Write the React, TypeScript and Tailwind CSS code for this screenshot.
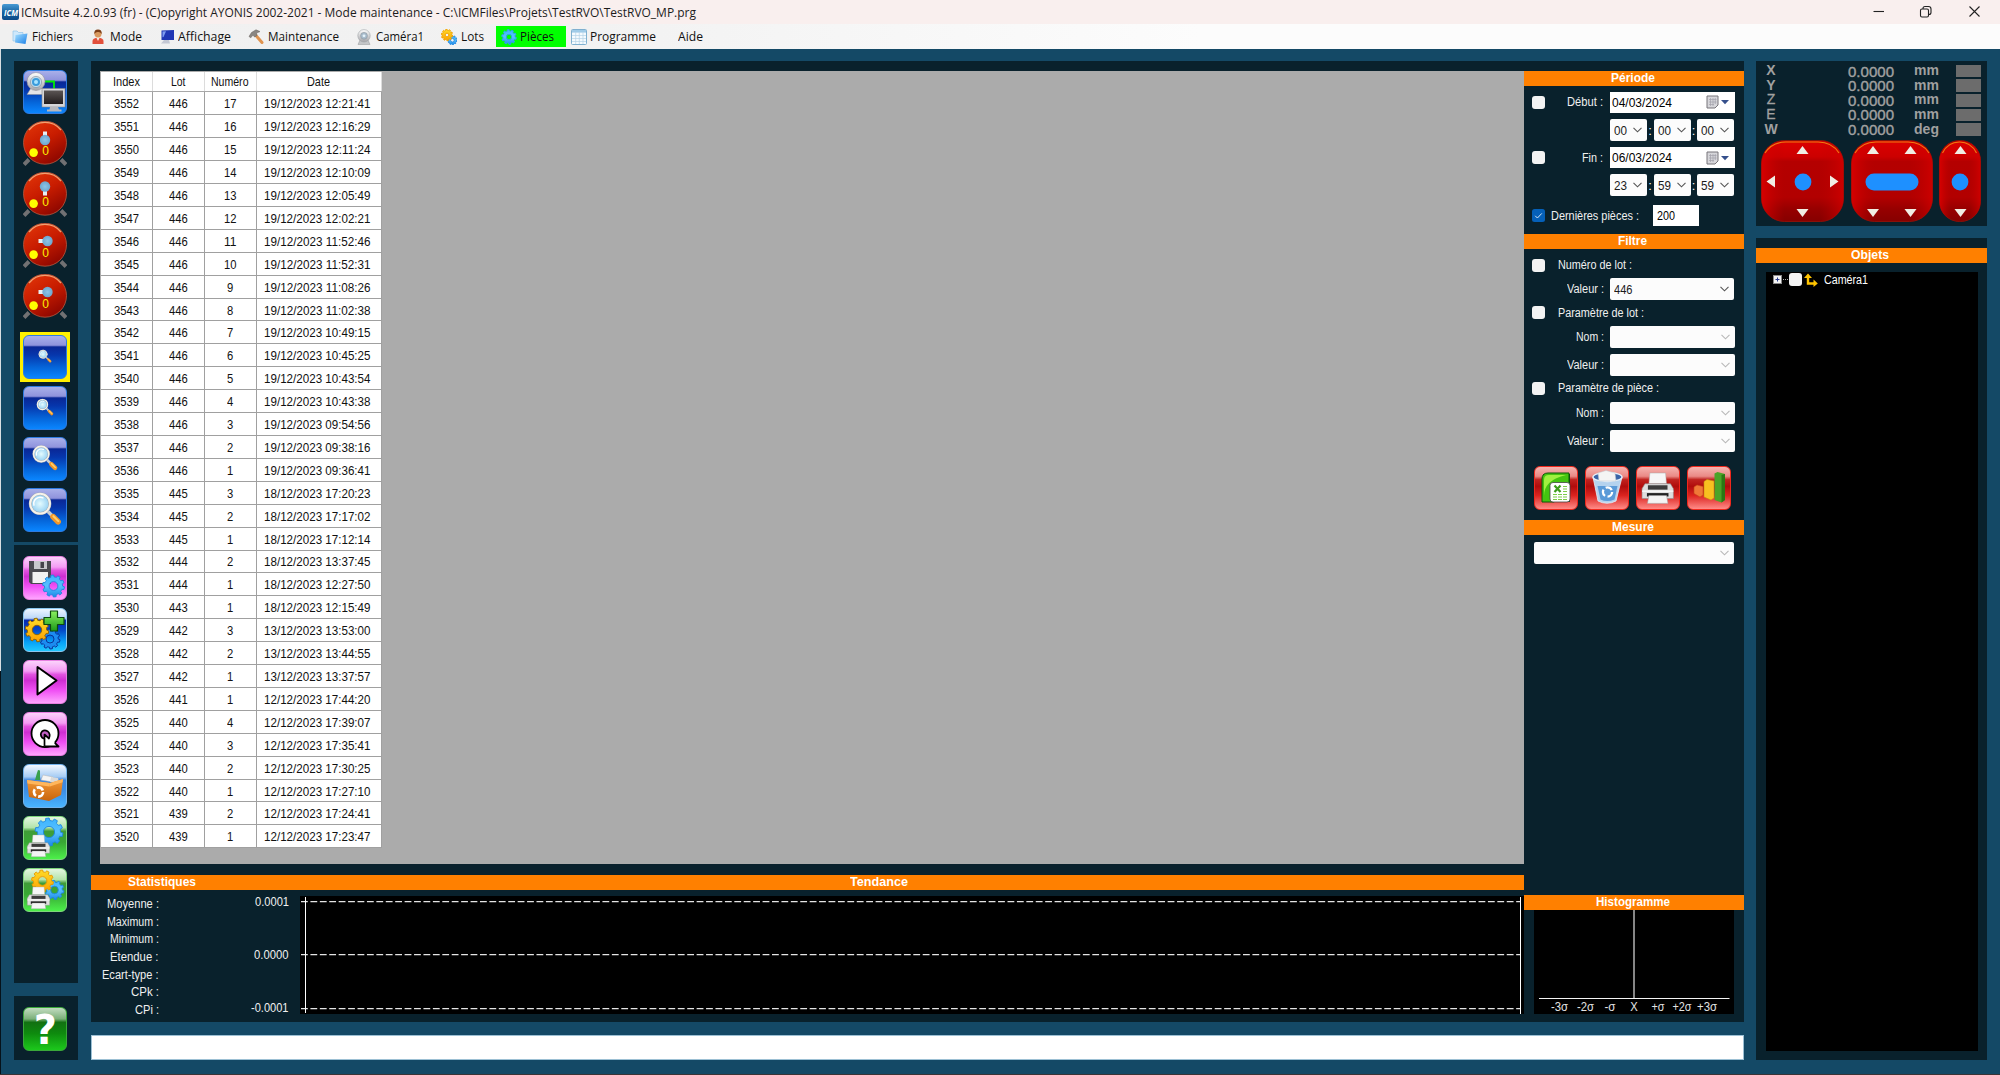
import React, { useLayoutEffect, useRef, useState } from 'react';

/* Single-line text condensed or widened to a given width. */
function T({ children, w, className = '' }: { children: string; w: number; className?: string }) {
  const ref = useRef<HTMLSpanElement>(null);
  const [k, setK] = useState(1);
  useLayoutEffect(() => {
    if (ref.current) setK(w / ref.current.getBoundingClientRect().width);
  }, []);
  return (
    <span className={'inline-block shrink-0 whitespace-nowrap leading-none ' + className} style={{ width: w }}>
      <span ref={ref} className="inline-block origin-left" style={{ transform: `scaleX(${k})` }}>
        {children}
      </span>
    </span>
  );
}

function gearPath(cx: number, cy: number, R: number, r: number, n: number, hole: number) {
  let d = '';
  for (let i = 0; i < n; i++) {
    const s = (Math.PI * 2) / n;
    const pts: [number, number][] = [[r, -0.5], [r, -0.3], [R, -0.2], [R, 0.2], [r, 0.3]];
    pts.forEach(([q, f]) => {
      const a = (i + f) * s + 0.2;
      d += `${d ? 'L' : 'M'}${(cx + q * Math.cos(a)).toFixed(2)} ${(cy + q * Math.sin(a)).toFixed(2)}`;
    });
  }
  d += `Z M${cx + hole} ${cy} a${hole} ${hole} 0 1 0 ${-2 * hole} 0 a${hole} ${hole} 0 1 0 ${2 * hole} 0Z`;
  return d;
}

function Gear({ x, y, r, fill, stroke = '#1e86e0', hole = 0.4 }: { x: number; y: number; r: number; fill: string; stroke?: string; hole?: number }) {
  return <path d={gearPath(x, y, r, r * 0.82, 10, r * hole)} fill={fill} stroke={stroke} strokeWidth=".9" strokeLinejoin="round" fillRule="evenodd" />;
}

function Defs() {
  return (
    <svg className="absolute h-0 w-0">
      <defs>
        <linearGradient id="dial" x1="0.2" y1="0" x2="0.8" y2="1">
          <stop offset="0" stopColor="#e03408" />
          <stop offset=".45" stopColor="#c81c00" />
          <stop offset="1" stopColor="#860400" />
        </linearGradient>
        <radialGradient id="ball">
          <stop offset="0" stopColor="#8cc4e8" />
          <stop offset="1" stopColor="#6fa6cc" />
        </radialGradient>
        <radialGradient id="lens">
          <stop offset="0" stopColor="#e4fbff" />
          <stop offset="1" stopColor="#8fcdf2" />
        </radialGradient>
        <linearGradient id="bluegear" x1="0" y1="0" x2="0" y2="1">
          <stop offset="0" stopColor="#3cb4ff" />
          <stop offset=".5" stopColor="#58c0ff" />
          <stop offset="1" stopColor="#1c8ae8" />
        </linearGradient>
        <linearGradient id="orangegear" x1="0" y1="0" x2="0" y2="1">
          <stop offset="0" stopColor="#ffdc28" />
          <stop offset="1" stopColor="#fba000" />
        </linearGradient>
        <linearGradient id="steel" x1="0" y1="0" x2="0" y2="1">
          <stop offset="0" stopColor="#ffffff" />
          <stop offset="1" stopColor="#a4a4a8" />
        </linearGradient>
        <linearGradient id="screen" x1="0" y1="0" x2="0" y2="1">
          <stop offset="0" stopColor="#5b5554" />
          <stop offset="1" stopColor="#221c1c" />
        </linearGradient>
        <linearGradient id="pad" x1="0" y1="0" x2="0" y2="1">
          <stop offset="0" stopColor="#dc0000" />
          <stop offset=".2" stopColor="#cc0000" />
          <stop offset=".26" stopColor="#b40000" />
          <stop offset=".7" stopColor="#b20000" />
          <stop offset=".85" stopColor="#960000" />
          <stop offset="1" stopColor="#860000" />
        </linearGradient>
        <linearGradient id="padside" x1="0" y1="0" x2="1" y2="0">
          <stop offset="0" stopColor="#e00000" stopOpacity=".8" />
          <stop offset=".28" stopColor="#c00000" stopOpacity="0" />
          <stop offset=".72" stopColor="#c00000" stopOpacity="0" />
          <stop offset="1" stopColor="#d80000" stopOpacity=".7" />
        </linearGradient>
        <linearGradient id="folder" x1="0" y1="0" x2="1" y2="1">
          <stop offset="0" stopColor="#a6e0ff" />
          <stop offset="1" stopColor="#1a7fe6" />
        </linearGradient>
        <linearGradient id="plus" x1="0" y1="0" x2="0" y2="1">
          <stop offset="0" stopColor="#8af060" />
          <stop offset="1" stopColor="#1d9a18" />
        </linearGradient>
        <linearGradient id="crate" x1="0" y1="0" x2="0" y2="1">
          <stop offset="0" stopColor="#f39a38" />
          <stop offset="1" stopColor="#c8640c" />
        </linearGradient>
      </defs>
    </svg>
  );
}

const blueBtn = 'border-[#2f7be0] bg-[linear-gradient(180deg,#a9b0ea_0%,#8f93dc_22%,#0a2796_26%,#0636ac_45%,#0566da_75%,#0a86ff_100%)]';
const pinkBtn = 'border-[#e77fe0] bg-[linear-gradient(180deg,#fbd3fb_0%,#f49cf4_24%,#e254e0_32%,#cf2ed2_46%,#f050f4_70%,#ffa4ff_100%)]';
const cyanBtn = 'border-[#8cc8f0] bg-[linear-gradient(180deg,#eef6ff_0%,#bcd8f8_22%,#0428b0_27%,#0348c8_50%,#06a0f8_78%,#20c8ff_100%)]';
const skyBtn = 'border-[#74b4ee] bg-[linear-gradient(180deg,#f4f9ff_0%,#a6ccf4_28%,#3f86dc_36%,#3c8ce4_60%,#48b4ff_100%)]';
const greenBtn = 'border-[#7ed67c] bg-[linear-gradient(180deg,#e4f6e0_0%,#b4e4ac_25%,#3f9c38_34%,#38a834_60%,#4cf04a_100%)]';
const helpBtn = 'border-[#3aa83a] bg-[linear-gradient(180deg,#c2dcc0_0%,#7cb07a_26%,#127012_34%,#0e8a0e_60%,#1cc81c_100%)]';
const redBtn = 'border-[#f0281c] bg-[linear-gradient(180deg,#f6b4b0_0%,#ea8a86_22%,#c02420_30%,#b00c0c_46%,#dc2420_68%,#ff8c88_100%)]';

function Btn({ tone, children }: { tone: string; children: React.ReactNode }) {
  return (
    <div className={'h-11 w-11 shrink-0 rounded-[6px] border ' + tone}>
      <svg viewBox="1 1 42 42" className="block h-full w-full overflow-visible">{children}</svg>
    </div>
  );
}

function Dial({ head }: { head: 'up' | 'down' | 'left' }) {
  const cx = head === 'left' ? 24.5 : 22;
  return (
    <svg viewBox="0 0 44 46" className="mb-[5px] block h-[46px] w-11 shrink-0">
      <path d="M1 43.5 L6 38.5 M43 43.5 L38 38.5" stroke="#717173" strokeWidth="4" />
      <circle cx="22" cy="21.7" r="21.5" fill="url(#dial)" stroke="#b85a40" strokeWidth=".8" />
      <path d="M6 9 A20.5 20.5 0 0 1 38 9" fill="none" stroke="#f2a070" strokeWidth="1.3" />
      {head === 'up' && <rect x="20" y="10.5" width="4" height="5" fill="#e8eef2" />}
      {head === 'down' && <rect x="20" y="18" width="4" height="5.5" fill="#e8eef2" />}
      {head === 'left' && <rect x="15.5" y="16" width="5" height="4" fill="#e8eef2" />}
      <circle cx={cx} cy={head === 'down' ? 14.5 : head === 'left' ? 18 : 19} r="5.2" fill="url(#ball)" />
      <circle cx="10.6" cy="31.6" r="4.3" fill="#ffff00" />
      <text x="22.6" y="33.7" fontSize="12" textAnchor="middle" fill="#ffee00" fontFamily="Liberation Sans">0</text>
    </svg>
  );
}

function Lens({ k }: { k: number }) {
  const x = 22 - 3.4 * k;
  const y = 21.5 - 4 * k;
  return (
    <g strokeLinecap="round">
      <path d={`M${x + 5.6 * k} ${y + 5.6 * k} L${x + 8 * k} ${y + 8 * k}`} stroke="#c8d0d8" strokeWidth={2.4 * k} />
      <path d={`M${x + 9 * k} ${y + 9 * k} L${x + 12.4 * k} ${y + 12.4 * k}`} stroke="#f0962a" strokeWidth={4 * k} />
      <path d={`M${x + 9.2 * k} ${y + 8.6 * k} L${x + 12.6 * k} ${y + 12 * k}`} stroke="#ffd068" strokeWidth={1.4 * k} />
      <circle cx={x} cy={y} r={6.8 * k} fill="url(#lens)" stroke="#9aa4ac" strokeWidth={2 * k} />
      <circle cx={x} cy={y} r={6.8 * k} fill="none" stroke="#f6f2ea" strokeWidth={1.4 * k} />
      <path d={`M${x - 4.2 * k} ${y + 1 * k} A${4.4 * k} ${4.4 * k} 0 0 1 ${x + 2 * k} ${y - 4 * k}`} fill="none" stroke="#ffffff" strokeWidth={1 * k} />
    </g>
  );
}

function Printer({ x, y, k }: { x: number; y: number; k: number }) {
  return (
    <g transform={`translate(${x} ${y}) scale(${k})`}>
      <path d="M7 0 H23 L24 11 H6 Z" fill="#f6f6f6" stroke="#a8a8a8" strokeWidth=".5" />
      <path d="M2 11 H28 L31 16 V26 H-1 V16 Z" fill="#dedede" stroke="#8e8e8e" strokeWidth=".6" />
      <path d="M5 12.5 H25 V17 H5Z" fill="#3c3c3c" />
      <path d="M-1 18.5 H31" stroke="#ffffff" strokeWidth="1.2" />
      <path d="M4 20.5 H26 V24 H4Z" fill="#222" />
      <path d="M6 23 H24 L25.5 31 H4.5 Z" fill="#f4f4f4" stroke="#9a9a9a" strokeWidth=".5" />
    </g>
  );
}

function Webcam() {
  return (
    <>
      <path d="M22 11.500 H31 V19" fill="none" stroke="#00f000" strokeWidth="1.8" />
      <path d="M8 18 H19 L22 24.500 H4 Z" fill="#e4e4e6" stroke="#8a8a90" strokeWidth=".5" />
      <circle cx="13" cy="11.500" r="9" fill="url(#steel)" stroke="#94949c" strokeWidth=".6" />
      <circle cx="13" cy="12" r="5.600" fill="#c4dcea" stroke="#7c8c9a" strokeWidth=".6" />
      <circle cx="13" cy="12" r="4" fill="#3a9cdc" />
      <circle cx="13" cy="12" r="2" fill="#a8e4ff" />
      <rect x="19" y="18.500" width="23" height="18.500" fill="#d6d6d8" stroke="#88888c" strokeWidth=".6" />
      <rect x="21" y="20.500" width="19" height="13.500" fill="url(#screen)" />
      <path d="M27 37 H35 L36 39.500 H38.500 V41.500 H24 V39.500 H26.500 Z" fill="#b8b8bc" />
    </>
  );
}

function MenuIcon({ name }: { name: string }) {
  return (
    <svg viewBox="0 0 16 16" className="block h-4 w-4 shrink-0">
      {name === 'folder' && (
        <>
          <path d="M1 2 H5 L6.5 3.5 H11 V12 H1Z" fill="#cfe8fb" stroke="#86bfe8" strokeWidth=".6" />
          <path d="M3.5 6 L15.5 4.5 L13.5 15 L3 13.5Z" fill="url(#folder)" />
        </>
      )}
      {name === 'user' && (
        <>
          <path d="M2.500 15 V12 Q2.500 9 8 8.500 Q13.500 9 13.500 12 V15Z" fill="#e2503c" />
          <path d="M6 8 L8 12 L10 8Z" fill="#f6ece0" />
          <circle cx="8" cy="4.8" r="3.6" fill="#d99a60" />
          <path d="M4.3 5 Q4 .6 8 .6 Q12 .6 11.7 5 Q10 2.6 8 3 Q6 2.6 4.3 5Z" fill="#7c3e18" />
        </>
      )}
      {name === 'screen' && (
        <>
          <path d="M2.5 1.5 L15 1 V11 L2.5 11Z" fill="#2036b4" />
          <path d="M3.500 2.500 L7 2.300 L4.500 8 L3.500 8.300Z" fill="#7f9cf0" />
          <path d="M5 11 H10 L11 14.5 H2 Z" fill="#c4c8d4" />
        </>
      )}
      {name === 'hammer' && (
        <>
          <path d="M7.5 6 L14 13.5" stroke="#e09450" strokeWidth="3" strokeLinecap="round" />
          <path d="M1 7.5 L3.5 3.5 L8 .8 L12 2.6 L8.5 4 L9 6.6 L6.5 8 L5 6 L2.8 8.8Z" fill="#8a8682" stroke="#66615c" strokeWidth=".5" />
        </>
      )}
      {name === 'webcam' && (
        <>
          <path d="M4 11 H12 L14 15.500 H2Z" fill="#c4c6c8" stroke="#96989a" strokeWidth=".5" />
          <circle cx="8" cy="6.8" r="6.200" fill="url(#steel)" stroke="#a0a4a8" strokeWidth=".6" />
          <circle cx="8" cy="6.8" r="3.4" fill="#a8bccc" stroke="#8a949c" strokeWidth=".6" />
          <circle cx="8" cy="6.8" r="1.4" fill="#e4f2fa" />
        </>
      )}
      {name === 'lots' && (
        <>
          <Gear x={11.4} y={11.2} r={4.6} fill="url(#bluegear)" />
          <Gear x={6} y={6} r={5.7} fill="url(#orangegear)" stroke="#f0a000" hole={0.32} />
        </>
      )}
      {name === 'piece' && <Gear x={8} y={8} r={7.4} fill="url(#bluegear)" stroke="#2ea0e8" hole={0.36} />}
      {name === 'table' && (
        <>
          <rect x=".5" y=".5" width="15" height="15" rx="1" fill="#f4fafe" stroke="#7fb0d0" />
          <rect x="1" y="1" width="14" height="2.6" fill="#9fcbe8" />
          <path d="M4.7 3 V15 M8.3 3 V15 M12 3 V15 M1 6.5 H15 M1 9.5 H15 M1 12.5 H15" stroke="#b4d2e6" strokeWidth=".7" />
        </>
      )}
    </svg>
  );
}

function Bar({ children, w, className = '' }: { children?: string; w?: number; className?: string }) {
  return (
    <div className={'flex h-[15px] shrink-0 items-center justify-center bg-[#ff8000] pb-[2px] pr-[2px] text-[13px] font-bold text-white ' + className}>
      {children && <T w={w || 40}>{children}</T>}
    </div>
  );
}

function Check({ on }: { on?: boolean }) {
  return on ? (
    <svg viewBox="0 0 13 13" className="h-[13px] w-[13px] shrink-0">
      <rect width="13" height="13" rx="2.5" fill="#0560b8" />
      <path d="M3.2 6.8 L5.4 9 L9.8 4.4" fill="none" stroke="#d4e6f6" strokeWidth="1" />
    </svg>
  ) : (
    <div className="h-[13px] w-[13px] shrink-0 rounded-[3px] bg-[#f3f3f3]" />
  );
}

function Select({ value, vw = 13, dim, className = '' }: { value?: string; vw?: number; dim?: boolean; className?: string }) {
  return (
    <div className={'flex h-[22px] shrink-0 items-center justify-between rounded-[2px] bg-[#fcfcfc] pl-1 pr-[5px] text-[13px] text-[#1a1a1a] ' + className}>
      {value ? <T w={vw}>{value}</T> : <span />}
      <svg viewBox="0 0 9 6" className={'h-1.5 w-[9px] ' + (dim ? 'text-[#b8b8b8]' : 'text-[#555]')}>
        <path d="M.5 .8 L4.5 4.8 L8.5 .8" fill="none" stroke="currentColor" strokeWidth="1.1" />
      </svg>
    </div>
  );
}

function DateField({ value }: { value: string }) {
  return (
    <div className="flex h-[21px] w-[125px] shrink-0 items-center bg-white pl-[2px] text-[13px] text-black">
      <T w={60}>{value}</T>
      <svg viewBox="0 0 24 14" className="ml-auto mr-[5px] h-3.5 w-6">
        <path d="M1 1 H12 V10 L9 13 H1Z" fill="#d6d6da" stroke="#77747a" />
        <path d="M3 4.5 H10.5 M3 7 H10.5 M3 9.5 H8 M4.5 3 V11 M7 3 V11 M9.3 3 V9" stroke="#a2a0aa" strokeWidth=".7" />
        <path d="M15 5 H23 L19 9.2Z" fill="#35508c" />
      </svg>
    </div>
  );
}

function TimeRow({ v }: { v: string[] }) {
  return (
    <div className="flex h-[22px] items-center gap-px pl-[86px] text-[13px] text-white">
      <Select value={v[0]} className="w-[37px]" />
      <span className="w-[5px] text-center leading-none">:</span>
      <Select value={v[1]} className="w-[37px]" />
      <span className="w-[4px] text-center leading-none">:</span>
      <Select value={v[2]} className="w-[37px]" />
    </div>
  );
}

function Labelled({ label, w, children, className = '' }: { label: string; w: number; children: React.ReactNode; className?: string }) {
  return (
    <div className={'flex h-[22px] items-center ' + className}>
      <div className="mr-[6px] flex w-[80px] shrink-0 justify-end"><T w={w}>{label}</T></div>
      {children}
    </div>
  );
}

function CheckLine({ label, w, className }: { label: string; w: number; className: string }) {
  return (
    <div className={'flex h-[14px] items-center pl-2 ' + className}>
      <Check />
      <T w={w} className="ml-[13.5px]">{label}</T>
    </div>
  );
}

const menu: [string, string, number, string][] = [
  ['folder', 'Fichiers', 41, 'ml-[4px]'],
  ['user', 'Mode', 32, 'ml-[4px]'],
  ['screen', 'Affichage', 53, 'ml-[3px]'],
  ['hammer', 'Maintenance', 71, 'ml-[4px]'],
  ['webcam', 'Caméra1', 48, 'ml-[4px]'],
  ['lots', 'Lots', 23, 'ml-[4px]'],
  ['piece', 'Pièces', 34, 'ml-[3px]'],
  ['table', 'Programme', 66, 'ml-[3px]'],
  ['', 'Aide', 25, ''],
];
const menuWidths = ['w-[78px]', 'w-[69px]', 'w-[89px]', 'w-[108px]', 'w-[85px]', 'w-[55px]', 'w-[70px] bg-[#00ff00] pl-[5px]', 'w-[107px] pl-[5px]', 'pl-[5px]'];

const rows = `3552 446 17 19/12/2023 12:21:41
3551 446 16 19/12/2023 12:16:29
3550 446 15 19/12/2023 12:11:24
3549 446 14 19/12/2023 12:10:09
3548 446 13 19/12/2023 12:05:49
3547 446 12 19/12/2023 12:02:21
3546 446 11 19/12/2023 11:52:46
3545 446 10 19/12/2023 11:52:31
3544 446 9 19/12/2023 11:08:26
3543 446 8 19/12/2023 11:02:38
3542 446 7 19/12/2023 10:49:15
3541 446 6 19/12/2023 10:45:25
3540 446 5 19/12/2023 10:43:54
3539 446 4 19/12/2023 10:43:38
3538 446 3 19/12/2023 09:54:56
3537 446 2 19/12/2023 09:38:16
3536 446 1 19/12/2023 09:36:41
3535 445 3 18/12/2023 17:20:23
3534 445 2 18/12/2023 17:17:02
3533 445 1 18/12/2023 17:12:14
3532 444 2 18/12/2023 13:37:45
3531 444 1 18/12/2023 12:27:50
3530 443 1 18/12/2023 12:15:49
3529 442 3 13/12/2023 13:53:00
3528 442 2 13/12/2023 13:44:55
3527 442 1 13/12/2023 13:37:57
3526 441 1 12/12/2023 17:44:20
3525 440 4 12/12/2023 17:39:07
3524 440 3 12/12/2023 17:35:41
3523 440 2 12/12/2023 17:30:25
3522 440 1 12/12/2023 17:27:10
3521 439 2 12/12/2023 17:24:41
3520 439 1 12/12/2023 17:23:47`.split('\n').map((l) => {
  const p = l.split(' ');
  return [p[0], p[1], p[2], p[3] + ' ' + p[4]];
});
const cols = 'grid grid-cols-[52px_52px_52px_125px]';

function Table() {
  return (
    <div className="w-[282px] pl-px pt-px text-[13px] text-[#111]">
      <div className={cols + ' h-5 border-b border-[#a8a8a8] bg-white'}>
        {([['Index', 27], ['Lot', 14.5], ['Numéro', 37.5], ['Date', 23]] as [string, number][]).map(([h, w]) => (
          <div key={h} className="flex items-center justify-center border-r border-[#dcdcdc]"><T w={w}>{h}</T></div>
        ))}
      </div>
      {rows.map((r) => (
        <div key={r[0]} className={cols + ' h-[22.92px] bg-white'}>
          {r.map((c, i) => (
            <div key={i} className={'flex items-center justify-center border-b border-r border-[#a0a0a0] pt-px ' + (i === 3 ? 'pr-[2px]' : '')}>
              <T w={i === 3 ? 106.5 : c.length * 6.25}>{c}</T>
            </div>
          ))}
        </div>
      ))}
    </div>
  );
}

function Sidebar() {
  return (
    <div className="flex w-16 shrink-0 flex-col">
      <div className="flex h-[481px] flex-col items-center bg-[#09212c] pr-px pt-[8.500px]">
        <Btn tone={blueBtn}><Webcam /></Btn>
        <div className="h-[7.500px] shrink-0" />
        <Dial head="up" />
        <Dial head="down" />
        <Dial head="left" />
        <Dial head="left" />
        <div className="mb-1 mt-[7px] flex h-[50px] w-[50px] shrink-0 items-center justify-center bg-[#fff000]">
          <Btn tone={blueBtn}><Lens k={0.58} /></Btn>
        </div>
        <div className="flex flex-col gap-[7px]">
          <Btn tone={blueBtn}><Lens k={0.75} /></Btn>
          <Btn tone={blueBtn}><Lens k={1.12} /></Btn>
          <Btn tone={blueBtn}><Lens k={1.45} /></Btn>
        </div>
      </div>
      <div className="mt-[3px] flex h-[438px] flex-col items-center gap-2 bg-[#09212c] pr-px pt-[10.500px]">
        <Btn tone={pinkBtn}>
          <path d="M6 5 H28 V28 H8 L6 26Z" fill="#4a4a50" />
          <rect x="11" y="5" width="13" height="8" fill="#c8c8cc" /><rect x="17.5" y="6" width="3.5" height="6" fill="#44444a" />
          <rect x="9.5" y="16" width="15.5" height="11" fill="#f2f2f2" />
          <Gear x={30.5} y={30} r={11} fill="url(#bluegear)" />
        </Btn>
        <Btn tone={cyanBtn}>
          <Gear x={27} y={31} r={10} fill="#1c8cf0" stroke="#0a2a90" />
          <Gear x={14} y={22} r={11.8} fill="url(#orangegear)" stroke="#8a5c00" />
          <path d="M27.5 3 H34.5 V9.5 H41 V16.5 H34.5 V23 H27.5 V16.5 H21 V9.5 H27.5Z" fill="url(#plus)" stroke="#0d4a10" strokeWidth="1.2" strokeLinejoin="round" />
        </Btn>
        <Btn tone={pinkBtn}>
          <path d="M14.5 7 V34.5 L33.5 20.5Z" fill="#fff" stroke="#000" strokeWidth="2" strokeLinejoin="round" />
        </Btn>
        <Btn tone={pinkBtn}>
          <circle cx="22" cy="21.500" r="13.500" fill="#fff" stroke="#000" strokeWidth="1.8" />
          <path d="M21.500 34.500 H35.500 L31.500 30.500 L21.500 22Z" fill="#fff" />
          <path d="M21.500 34.500 H35.500 L31.800 30.800" fill="none" stroke="#000" strokeWidth="1.8" strokeLinejoin="round" />
          <path d="M21.500 34.500 V22.500 L26 26.500 Q28 22 24.500 19.200 Q21.500 17.500 19 19.500 Q16.500 22.500 19.200 25.800 L21.500 27" fill="#c060c4" stroke="#000" strokeWidth="1.700" strokeLinejoin="round" />
        </Btn>
        <Btn tone={skyBtn}>
          <path d="M12 16 L14 9 L15 6 L17 6.5 L17 16Z" fill="#38a04c" />
          <path d="M18 16 L20 11 L30 13 L30 18Z" fill="#f4f4f4" stroke="#b4b4b4" strokeWidth=".5" />
          <path d="M28 13 L35 14 L36 18 H27Z" fill="#dadada" />
          <path d="M4 16 L27 19 L40 15 L38 31 L26 37 L6 33Z" fill="url(#crate)" />
          <path d="M4 16 L27 19 L26.5 22.5 L4.5 19.5Z M27 19 L40 15 L39.6 18.2 L26.8 22.5Z" fill="#ffb65c" />
          <circle cx="15.5" cy="28" r="4.6" fill="none" stroke="#fff" strokeWidth="2.6" strokeDasharray="7.4 2.2" />
        </Btn>
        <Btn tone={greenBtn}>
          <Gear x={26} y={16} r={14} fill="url(#bluegear)" />
          <Printer x={5} y={19} k={0.7} />
        </Btn>
        <Btn tone={greenBtn}>
          <Gear x={31.5} y={22} r={9.5} fill="url(#bluegear)" />
          <Gear x={19.5} y={13} r={11} fill="url(#orangegear)" stroke="#e89800" />
          <Printer x={5} y={19} k={0.7} />
        </Btn>
      </div>
      <div className="mt-[13px] flex h-16 flex-col items-center bg-[#09212c] pr-px pt-[10.500px]">
        <Btn tone={helpBtn}>
          <text x="22.3" y="36.5" textAnchor="middle" fontSize="40" fontWeight="bold" fontFamily="DejaVu Sans" fill="#fff">?</text>
        </Btn>
      </div>
    </div>
  );
}

const dashes = [902, 955, 1009];
const stats: [string, number][] = [['Moyenne :', 52], ['Maximum :', 52], ['Minimum :', 49], ['Etendue :', 48.5], ['Ecart-type :', 56.5], ['CPk :', 28], ['CPi :', 24]];
const sigmas: [string, number, number][] = [['-3σ', 1559.5, 17], ['-2σ', 1585.5, 17], ['-σ', 1610, 11], ['X', 1634, 7.5], ['+σ', 1658, 13], ['+2σ', 1682, 19], ['+3σ', 1707, 20]];

function Center() {
  return (
    <div className="flex w-[1433px] shrink-0 flex-col">
      <div className="ml-[9px] mt-[10px] h-[792.500px] bg-[#ababab]"><Table /></div>
      <div className="mt-[11.500px] flex h-[15px] shrink-0">
        <Bar w={68} className="w-[145px]">Statistiques</Bar>
        <Bar w={58} className="w-[1288px]">Tendance</Bar>
      </div>
      <div className="flex pt-[6px] text-[12.5px] text-[#f0f0f0]">
        <div className="-mt-px flex w-[69px] flex-col items-end pr-px">
          {stats.map(([s, w]) => (
            <div key={s} className="flex h-[17.65px] items-center"><T w={w}>{s}</T></div>
          ))}
        </div>
        <div className="-mt-px flex h-[119px] w-[129px] flex-col items-end justify-between text-[13px]">
          <T w={34}>0.0001</T>
          <T w={34.5}>0.0000</T>
          <T w={37.5}>-0.0001</T>
        </div>
        <svg viewBox="300 896 1224 118" className="ml-[11px] h-[118px] w-[1224px] shrink-0 bg-black">
          {dashes.map((y) => (
            <path key={y} d={`M301 ${y - 0.4} H1521`} stroke="#e4e4e4" strokeWidth="1.2" strokeDasharray="6.8 2.62" />
          ))}
          <path d="M305.5 897 V1013 M1520.5 897 V1014" stroke="#ffffff" strokeWidth="1" />
        </svg>
      </div>
    </div>
  );
}

function Filters() {
  return (
    <div className="mt-[10px] flex h-[951px] w-[220px] shrink-0 flex-col text-[12.5px] text-[#f0f0f0]">
      <Bar w={44}>Période</Bar>
      <div className="mt-[5px] flex h-[22px] items-center">
        <div className="flex w-[80px] items-center justify-between pl-2 pr-px"><Check /><T w={36}>Début :</T></div>
        <div className="ml-[6px]"><DateField value="04/03/2024" /></div>
      </div>
      <div className="h-[6px]" />
      <TimeRow v={['00', '00', '00']} />
      <div className="mt-[5.500px] flex h-[22px] items-center">
        <div className="flex w-[80px] items-center justify-between pl-2 pr-px"><Check /><T w={21}>Fin :</T></div>
        <div className="ml-[6px]"><DateField value="06/03/2024" /></div>
      </div>
      <div className="h-[5.500px]" />
      <TimeRow v={['23', '59', '59']} />
      <div className="mt-[9px] flex h-[21px] items-center pl-2">
        <Check on />
        <T w={88} className="ml-[6px]">Dernières pièces :</T>
        <div className="ml-[14px] flex h-[21px] w-[46px] items-center bg-white pl-1 text-[13px] text-black"><T w={18}>200</T></div>
      </div>
      <Bar w={29} className="mt-2">Filtre</Bar>
      <CheckLine label="Numéro de lot :" w={74} className="mt-[9px]" />
      <Labelled label="Valeur :" w={37} className="mt-[6px]"><Select value="446" vw={18.5} className="w-[124px]" /></Labelled>
      <CheckLine label="Paramètre de lot :" w={86} className="mt-[5.500px]" />
      <Labelled label="Nom :" w={28} className="mt-[6.500px]"><Select dim className="w-[125px]" /></Labelled>
      <Labelled label="Valeur :" w={37} className="mt-[6px]"><Select dim className="w-[125px]" /></Labelled>
      <CheckLine label="Paramètre de pièce :" w={101} className="mt-[5px]" />
      <Labelled label="Nom :" w={28} className="mt-[7px]"><Select dim className="w-[125px]" /></Labelled>
      <Labelled label="Valeur :" w={37} className="mt-[6px]"><Select dim className="w-[125px]" /></Labelled>
      <div className="mt-[14px] flex gap-[7px] pl-[10.500px]">
        <Btn tone={redBtn}>
          <path d="M9 8 H36 V36 H9Z" fill="#0e4a10" />
          <path d="M8 13 Q8 7 14 7 H35 V24 L20 36 H8Z" fill="#44c410" stroke="#0c5a08" />
          <path d="M10 30 Q10 14 32 9 H15 Q10 9 10 14Z" fill="#a0f040" />
          <rect x="16" y="16.5" width="20" height="19.5" rx="3" fill="#fff" stroke="#444" strokeWidth=".8" />
          <path d="M20.5 19.5 L26.5 26 M26.5 19.5 L20.5 26" stroke="#3c9c1c" strokeWidth="2.2" />
          <path d="M29 20.5 H34 M29 23 H34 M29 25.5 H34 M19 28.5 H34 M19 31 H34 M19 33.5 H34" stroke="#7ccc48" strokeWidth="1.2" strokeDasharray="4 1" />
        </Btn>
        <Btn tone={redBtn}>
          <path d="M8 11 L13 35 Q22 39.5 31 35 L37 11Z" fill="#b4d2ee" stroke="#e4f0fa" strokeWidth=".8" />
          <path d="M12.500 20 H32.500 L29.500 33.500 Q22 36.500 15.500 33.500Z" fill="#5a9ad8" />
          <ellipse cx="22.5" cy="11" rx="14.5" ry="4.5" fill="#3a64a8" stroke="#e8f2fb" strokeWidth="1.4" />
          <path d="M13 7 L21 4.5 L30 7 L31 15 H14Z" fill="#f4f4f4" stroke="#bcc4cc" strokeWidth=".5" />
          <circle cx="22.5" cy="26" r="4.6" fill="none" stroke="#fff" strokeWidth="2.3" strokeDasharray="7 2.6" />
        </Btn>
        <Btn tone={redBtn}><Printer x={7} y={7} k={0.98} /></Btn>
        <Btn tone={redBtn}>
          <path d="M7 21 L10 19 L16 20.5 V29 L13 31 L7 27.5Z" fill="#f07838" stroke="#c84818" strokeWidth=".6" />
          <path d="M17 15.5 L20 13.5 L27 15 V32 L24 34 L17 31Z" fill="#f8c020" stroke="#c88a10" strokeWidth=".6" />
          <path d="M27.5 7.5 L30.5 6 L38 8 V34 L34.5 36.5 L27.5 34Z" fill="#4aa428" />
          <path d="M34.5 9 L38 8 V34 L34.5 36.5Z" fill="#2c7814" />
        </Btn>
      </div>
      <Bar w={42} className="mt-[10px]">Mesure</Bar>
      <div className="pl-[10.500px] pt-[7px]"><Select dim className="w-[200px]" /></div>
      <Bar w={74} className="mt-auto">Histogramme</Bar>
      <svg viewBox="1534 910 200 104" className="mb-[8px] ml-[10px] h-[104px] w-[200px] shrink-0 bg-black">
        <path d="M1634 910 V998" stroke="#a8a8a8" strokeWidth="1.6" />
        <path d="M1539 998.5 H1729.5" stroke="#f4f4f4" strokeWidth="1" />
        {sigmas.map(([s, x, w]) => (
          <text key={s} x={x - w / 2} y="1010.5" textLength={w} lengthAdjust="spacingAndGlyphs" fontSize="12.5" fill="#e4e4e4" fontFamily="Liberation Sans">{s}</text>
        ))}
      </svg>
    </div>
  );
}

function Pad({ w, arrows, children }: { w: number; arrows: string; children: React.ReactNode }) {
  return (
    <svg viewBox={`0 0 ${w} 82`} className="h-[82px] shrink-0" style={{ width: w }}>
      <rect x=".5" y=".5" width={w - 1} height="81" rx={w > 50 ? 23 : 20} fill="url(#pad)" stroke="#8a1008" />
      <rect x=".5" y=".5" width={w - 1} height="81" rx={w > 50 ? 23 : 20} fill="url(#padside)" />
      <path d={w > 50 ? 'M4 13 Q11 2 25 2 H57 Q71 2 78 13' : 'M3.5 13 Q9 2 20.5 2 Q32 2 37.5 13'} fill="none" stroke="#f07c10" strokeWidth="1.1" />
      <path d={arrows} fill="#f0eee4" />
      {children}
    </svg>
  );
}

function Axes() {
  return (
    <div className="h-[165px] bg-[#09212c] pt-[2.500px]">
      {[['X', 'mm', 'font-bold'], ['Y', 'mm', 'font-bold'], ['Z', 'mm', '[-webkit-text-stroke:0.3px_#a0a0a0]'], ['E', 'mm', '[-webkit-text-stroke:0.3px_#a0a0a0]'], ['W', 'deg', 'font-bold']].map(([a, u, f]) => (
        <div key={a} className="flex h-[14.6px] items-center leading-none text-[#a0a0a0]">
          <span className={'relative -top-px ml-2 w-[15px] text-center text-[14px] leading-none ' + f}>{a}</span>
          <T w={46} className="ml-[69px] text-[15px] [-webkit-text-stroke:0.4px_#a0a0a0]">0.0000</T>
          <span className="relative -top-px ml-[17px] w-[32px] text-center text-[14px] font-bold leading-none">{u}</span>
          <span className="ml-[13px] h-[12.6px] w-[25px] bg-[#6c6c6c]" />
        </div>
      ))}
      <div className="mt-[3.500px] flex pl-[5px]">
        <Pad w={83} arrows="M41.5 6 L47.5 14 H35.5Z M41.5 77 L47.5 69 H35.5Z M5.5 41.5 L14 35.5 V47.5Z M77.5 41.5 L69 35.5 V47.5Z">
          <circle cx="42" cy="42" r="8.4" fill="#1e90ff" />
        </Pad>
        <div className="w-[7px]" />
        <Pad w={82} arrows="M22 6 L28 14 H16Z M22 77 L28 69 H16Z M59.5 6 L65.5 14 H53.5Z M59.5 77 L65.5 69 H53.5Z">
          <rect x="14.5" y="33.5" width="53" height="17" rx="8.5" fill="#1e90ff" />
        </Pad>
        <div className="w-[6px]" />
        <Pad w={42} arrows="M21.5 6 L27.5 14 H15.5Z M21.5 77 L27.5 69 H15.5Z">
          <circle cx="21" cy="42" r="8.4" fill="#1e90ff" />
        </Pad>
      </div>
    </div>
  );
}

export default function App() {
  return (
    <div className="flex h-[1075px] w-[2000px] flex-col overflow-hidden bg-[#144966] font-['Liberation_Sans',sans-serif]">
      <Defs />
      <div className="flex h-6 shrink-0 items-center bg-[#f9efee] pl-[2px] font-['Open_Sans',sans-serif] text-[13.5px] text-[#1c1c1c]">
        <div className="flex h-4 w-[17px] items-center justify-center rounded-[2px] bg-[linear-gradient(180deg,#4a9ad4,#175f9e_55%,#0c4a88)] font-bold italic text-white">
          <T w={14} className="text-[9px]">ICM</T>
        </div>
        <T w={675} className="ml-[2px] mt-px">{'ICMsuite 4.2.0.93 (fr) - (C)opyright AYONIS 2002-2021 - Mode maintenance - C:\\ICMFiles\\Projets\\TestRVO\\TestRVO_MP.prg'}</T>
        <svg viewBox="0 0 112 14" className="ml-auto mr-[18px] h-3.5 w-28" fill="none" stroke="#222" strokeWidth="1.1">
          <path d="M3.5 6.5 H14" />
          <rect x="50.5" y="4" width="8" height="8" rx="1.5" />
          <path d="M53 4 V3.5 Q53 1.5 55 1.5 H58.5 Q61 1.5 61 4 V7.5 Q61 9.5 58.8 9.5" />
          <path d="M99.5 1.5 L109.5 11.5 M109.5 1.5 L99.5 11.5" />
        </svg>
      </div>
      <div className="flex h-[25px] shrink-0 items-start bg-[linear-gradient(90deg,#f0f0f0,#f2f2f2_30%,#fcfcfc_60%)] pl-[12px] pt-[2px] font-['Open_Sans',sans-serif] text-[13px] text-[#111]">
        {menu.map(([icon, label, w, gap], i) => (
          <div key={label} className={'flex h-[21px] shrink-0 items-center ' + menuWidths[i]}>
            {icon && <MenuIcon name={icon} />}
            <T w={w} className={gap}>{label}</T>
          </div>
        ))}
      </div>
      <div className="flex h-[1025px] shrink-0">
        <div className="w-px shrink-0">
          <div className="h-[622px] bg-[#d8dee2]" />
          <div className="h-[403px] bg-[#06121a]" />
        </div>
        <div className="flex pl-[12.500px] pt-[12.400px]">
          <Sidebar />
          <div className="ml-[13px] flex w-[1653px] shrink-0 flex-col">
            <div className="flex h-[961px] bg-[#09212c]">
              <Center />
              <Filters />
            </div>
            <div className="mt-[12.500px] h-[25px] border border-[#9cc0d4] bg-white" />
          </div>
          <div className="ml-3 flex w-[231.500px] shrink-0 flex-col">
            <Axes />
            <div className="mt-3 flex h-[821.500px] flex-col bg-[#09212c] pt-[9.500px]">
              <Bar w={38}>Objets</Bar>
              <div className="ml-[10px] mt-[9px] h-[779px] w-[212px] bg-black">
                <div className="flex h-4 items-center pl-[7px] text-[12.5px] text-white">
                  <svg viewBox="0 0 16 9" className="h-[9px] w-4">
                    <rect x=".5" y=".5" width="8" height="8" fill="#f4f4f4" stroke="#8a8a8a" />
                    <path d="M2.5 4.5 H6.5 M4.5 2.5 V6.5" stroke="#2a3c90" />
                    <path d="M10 4.5 H16" stroke="#b0b0b0" strokeDasharray="1 1" />
                  </svg>
                  <Check />
                  <svg viewBox="0 0 14 14" className="ml-[2px] h-3.5 w-3.5">
                    <path d="M4 4 V10.500 H10" fill="none" stroke="#ffc400" strokeWidth="2.4" />
                    <path d="M0 5 L4 .5 L8 5Z M9.5 6.500 L13.8 10.500 L9.5 14Z" fill="#ffc400" />
                  </svg>
                  <T w={44} className="ml-[6px]">Caméra1</T>
                </div>
              </div>
            </div>
          </div>
        </div>
      </div>
      <div className="h-px shrink-0 bg-[#3c3436]" />
    </div>
  );
}
